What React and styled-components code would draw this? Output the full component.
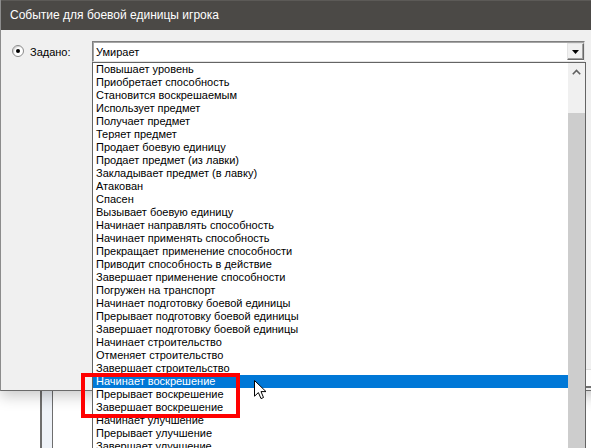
import React from 'react'
import styled, { createGlobalStyle } from 'styled-components'

const events = [
  'Повышает уровень',
  'Приобретает способность',
  'Становится воскрешаемым',
  'Использует предмет',
  'Получает предмет',
  'Теряет предмет',
  'Продает боевую единицу',
  'Продает предмет (из лавки)',
  'Закладывает предмет (в лавку)',
  'Атакован',
  'Спасен',
  'Вызывает боевую единицу',
  'Начинает направлять способность',
  'Начинает применять способность',
  'Прекращает применение способности',
  'Приводит способность в действие',
  'Завершает применение способности',
  'Погружен на транспорт',
  'Начинает подготовку боевой единицы',
  'Прерывает подготовку боевой единицы',
  'Завершает подготовку боевой единицы',
  'Начинает строительство',
  'Отменяет строительство',
  'Завершает строительство',
  'Начинает воскрешение',
  'Прерывает воскрешение',
  'Завершает воскрешение',
  'Начинает улучшение',
  'Прерывает улучшение',
  'Завершает улучшение',
  'Отменяет улучшение',
]

const SELECTED = 'Начинает воскрешение'

export default function App() {
  return (
    <>
      <GlobalStyle />
      <Page>
        <BackWindow />
        <Dialog>
          <TitleBar>Событие для боевой единицы игрока</TitleBar>
          <Body>
            <Row>
              <Radio />
              <Label>Задано:</Label>
              <Combo>
                <ComboText>Умирает</ComboText>
                <DropButton>
                  <svg width="7" height="4" viewBox="0 0 7 4">
                    <path d="M0 0 H7 L3.5 4 Z" fill="#000" />
                  </svg>
                </DropButton>
                <DropList>
                  <Items>
                    {events.map((e) => (
                      <Item key={e} selected={e === SELECTED}>{e}</Item>
                    ))}
                  </Items>
                  <ScrollBar>
                    <ArrowUp>
                      <svg width="9" height="6" viewBox="0 0 9 6">
                        <path d="M0.8 5.2 L4.5 1.5 L8.2 5.2" fill="none" stroke="#606060" strokeWidth="1.6" />
                      </svg>
                    </ArrowUp>
                    <Thumb />
                  </ScrollBar>
                </DropList>
              </Combo>
            </Row>
            <Footer>
              <Button />
            </Footer>
          </Body>
        </Dialog>
        <Highlight />
        <Cursor>
          <svg width="13" height="20" viewBox="0 0 13 20">
            <path
              d="M0.5 0.5 L0.5 16.2 L4.4 12.6 L7 18.6 L9.5 17.5 L7 11.6 L12 11.6 Z"
              fill="#fff"
              stroke="#000"
              strokeWidth="1"
              strokeLinejoin="round"
            />
          </svg>
        </Cursor>
      </Page>
    </>
  )
}

const GlobalStyle = createGlobalStyle`
  body {
    margin: 0;
    background: #fff;
  }
`
const Page = styled.div`
  position: relative;
  width: 591px;
  height: 448px;
  overflow: hidden;
  background: #fff;
  font-family: "Liberation Sans", Arial, sans-serif;
`
const BackWindow = styled.div`
  position: absolute;
  left: 40px;
  top: 370px;
  width: 10px;
  height: 100px;
  background: #eef2f8;
  border-left: 2px solid #6e6e6e;
  border-right: 1px solid #6e6e6e;
`
const Dialog = styled.div`
  position: relative;
  z-index: 1;
  width: 660px;
  height: 391px;
  box-sizing: border-box;
  display: flex;
  flex-direction: column;
  background: #f0f0f0;
  border-left: 1px solid #8c8c8c;
  border-bottom: 1px solid #6a6a6a;
  box-shadow: 0 5px 14px rgba(0, 0, 0, 0.22);
`
const TitleBar = styled.div`
  height: 30px;
  box-sizing: border-box;
  border-top: 1px solid #5c5a57;
  background: #4b4946;
  color: #fff;
  font-size: 12px;
  line-height: 28px;
  padding-left: 9px;
`
const Body = styled.div`
  flex: 1;
  display: flex;
  flex-direction: column;
  justify-content: space-between;
  padding: 11px 0 2px 11px;
`
const Row = styled.div`
  display: flex;
  align-items: center;
`
const Radio = styled.span`
  position: relative;
  width: 12px;
  height: 12px;
  box-sizing: border-box;
  border-radius: 50%;
  border: 1px solid #8a8a8a;
  background: #fff;
  box-shadow: inset 1px 1px 1px rgba(0, 0, 0, 0.18);
  margin-top: -2px;

  &::after {
    content: '';
    position: absolute;
    left: 3px;
    top: 3px;
    width: 4px;
    height: 4px;
    border-radius: 50%;
    background: #000;
  }
`
const Label = styled.span`
  width: 62px;
  margin-left: 6px;
  font-size: 11px;
  color: #000;
`
const Combo = styled.div`
  position: relative;
  width: 493px;
  height: 21px;
  box-sizing: border-box;
  display: flex;
  align-items: center;
  justify-content: space-between;
  background: #fff;
  border: 1px solid;
  border-color: #7f7f7f #e3e3e3 #e3e3e3 #7f7f7f;
  box-shadow: inset 1px 1px 0 #a5a5a5;
`
const ComboText = styled.span`
  padding-left: 3px;
  font-size: 11px;
  color: #000;
`
const DropButton = styled.div`
  width: 17px;
  height: 17px;
  box-sizing: border-box;
  display: flex;
  align-items: center;
  justify-content: center;
  background: #f0f0f0;
  border: 1px solid;
  border-color: #e3e3e3 #696969 #696969 #e3e3e3;
  box-shadow: inset -1px -1px 0 #a0a0a0;
`
const DropList = styled.div`
  position: absolute;
  left: -1px;
  top: 20px;
  width: 494px;
  height: 420px;
  box-sizing: border-box;
  display: flex;
  background: #fff;
  border: 1px solid #646464;
`
const Items = styled.div`
  flex: 1;
  display: flex;
  flex-direction: column;
`
const Item = styled.div`
  height: 13px;
  line-height: 13px;
  padding-left: 3px;
  font-size: 11px;
  white-space: nowrap;
  color: ${({ selected }) => (selected ? '#fff' : '#000')};
  background: ${({ selected }) => (selected ? '#0078d7' : 'transparent')};
`
const ScrollBar = styled.div`
  width: 17px;
  display: flex;
  flex-direction: column;
  background: #f0f0f0;
`
const ArrowUp = styled.div`
  height: 17px;
  display: flex;
  align-items: center;
  justify-content: center;
`
const Thumb = styled.div`
  margin-top: 33px;
  flex: 1;
  background: #cdcdcd;
`
const Footer = styled.div`
  display: flex;
  justify-content: flex-end;
`
const Button = styled.div`
  width: 75px;
  height: 19px;
  box-sizing: border-box;
  background: #fdfdfd;
  border-left: 1px solid #adadad;
  border-top: 1px solid #dcdcdc;
  border-bottom: 2px solid #707070;
`
const Highlight = styled.div`
  position: absolute;
  z-index: 2;
  left: 81px;
  top: 373px;
  width: 159px;
  height: 45px;
  box-sizing: border-box;
  border: 4px solid #f00;
`
const Cursor = styled.div`
  position: absolute;
  z-index: 3;
  left: 254px;
  top: 380px;
  line-height: 0;
`
